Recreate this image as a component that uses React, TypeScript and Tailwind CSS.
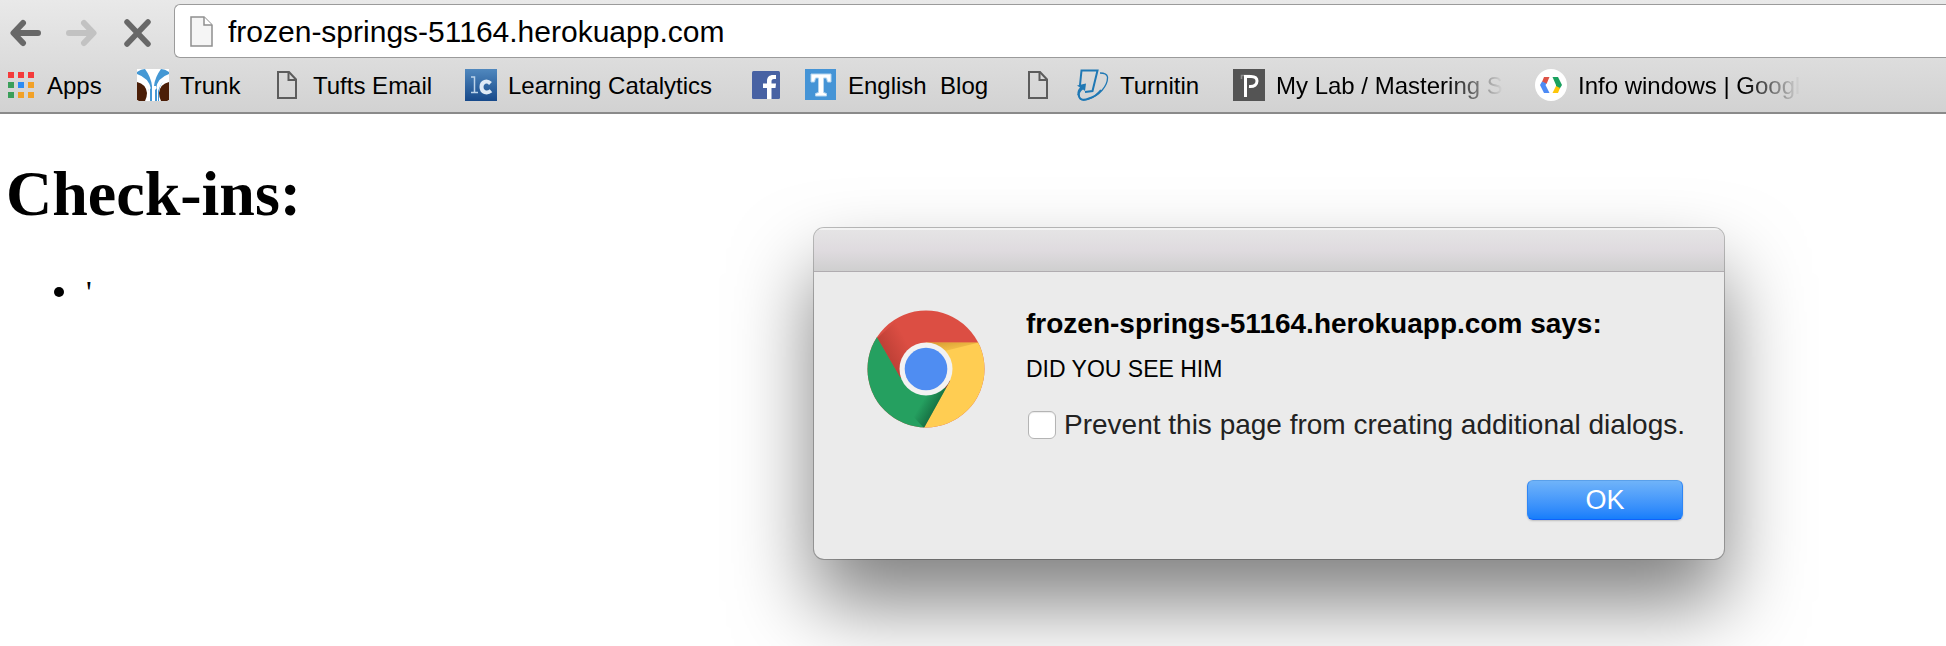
import type { ReactNode } from "react";

const HOST = "frozen-springs-51164.herokuapp.com";

function AppsIcon() {
  const colors = ["#f43b3b", "#f43b3b", "#f43b3b", "#3b9f5a", "#2b8cf5", "#f2a127", "#3b9f5a", "#f2a127", "#f2a127"];
  return (
    <svg width="26" height="26" viewBox="0 0 26 26" aria-hidden="true">
      {colors.map((c, i) => (
        <rect key={i} x={(i % 3) * 10} y={Math.floor(i / 3) * 10} width="6" height="6" fill={c} />
      ))}
    </svg>
  );
}

function TrunkIcon() {
  return (
    <svg width="32" height="32" viewBox="0 0 32 32" aria-hidden="true">
      <rect width="32" height="32" fill="#fff" />
      <path d="M0 3Q4 0 8 0Q14 8 15 17V32H12V22Q10 11 0 8Z" fill="#4498d4" />
      <path d="M32 3Q28 0 24 0Q18 8 17 17H19V32H22V22Q24 11 32 8Z" fill="#4498d4" />
      <path d="M0 5Q12 9 14 20V32H12V22Q9 12 0 9Z" fill="#fff" />
      <path d="M32 5Q20 9 19 20V32H21V22Q24 12 32 9Z" fill="#fff" />
      <path d="M13 19L15 21V32H13ZM18 21L20 19V32H18Z" fill="#4498d4" />
      <path d="M0 13Q9 15 10 24Q10 28 8 32H2L0 31ZM32 13Q23 15 22 24Q22 28 24 32H30L32 31Z" fill="#4b1e07" />
    </svg>
  );
}

function FileIcon() {
  return (
    <svg width="20" height="28" viewBox="0 0 20 28" fill="none" stroke="#5c5c5c" strokeWidth="2" aria-hidden="true">
      <path d="M1 1H12L19 8.500V27H1Z" />
      <path d="M11.500 1V9H19" />
    </svg>
  );
}

function CatalyticsIcon() {
  return (
    <svg width="32" height="32" viewBox="0 0 32 32" aria-hidden="true">
      <defs>
        <linearGradient id="lc" x1="0" y1="0" x2="0" y2="1">
          <stop offset="0" stopColor="#5088be" />
          <stop offset="1" stopColor="#17498a" />
        </linearGradient>
      </defs>
      <rect width="32" height="32" fill="url(#lc)" />
      <path d="M6 8H9.500V23M6 23.500H13" fill="none" stroke="#bcd3ea" strokeWidth="1.500" />
      <path d="M25.500 14.500C22 11 16.500 12.500 16.500 18C16.500 23.500 22 25 26 21.800" fill="none" stroke="#dfeaf6" strokeWidth="4" />
    </svg>
  );
}

function FacebookIcon() {
  return (
    <svg width="28" height="28" viewBox="0 0 28 28" aria-hidden="true">
      <rect width="28" height="28" rx="1.500" fill="#4862a3" />
      <path d="M15 28V17H11V12.500H15V10C15 6 17.500 4 21 4H24V8H22C20 8 19.500 9 19.500 10.500V12.500H24L23.500 17H19.500V28Z" fill="#fff" />
    </svg>
  );
}

function BlogIcon() {
  return (
    <svg width="32" height="32" viewBox="0 0 32 32" aria-hidden="true">
      <rect width="31" height="31" fill="#4594d6" />
      <path
        d="M6 5H26V13H22.500L21.500 9H18.500V23.500L21.500 24.500V27H10.500V24.500L13.500 23.500V9H10.500L9.500 13H6Z"
        fill="#fff"
        stroke="#b5d5ef"
        strokeWidth="1"
      />
    </svg>
  );
}

function TurnitinIcon() {
  return (
    <svg width="32" height="32" viewBox="0 0 32 32" fill="none" stroke="#1f78b4" aria-hidden="true">
      <path d="M3 16L4.500 1.500H20.500L15.500 22L8 23" strokeWidth="2" />
      <path d="M0 16.500L9 14.500L8 22L6 20.500Q2.500 22.500 2.500 27L0.500 26Q0 21 3 18.500Z" fill="#1f78b4" stroke="none" />
      <path d="M2 26C2 31 6 32 11 30C22 27 31 17 30.500 8C30 5 27 4 23 4" strokeWidth="1.300" />
      <path d="M1.500 25C2 31 6 32 12 29.500C17 28 21 25 24 21" strokeWidth="2" />
    </svg>
  );
}

function PearsonIcon() {
  return (
    <svg width="32" height="32" viewBox="0 0 32 32" aria-hidden="true">
      <rect width="32" height="32" fill="#545454" />
      <path d="M8.500 10V6.500H17" fill="none" stroke="#8c8c8c" strokeWidth="1.500" />
      <path d="M12.500 28V8.500M11 7.500H18C22.500 7.500 24 9.500 24 12C24 15.500 21.500 18 16 17.500" fill="none" stroke="#fff" strokeWidth="3" />
    </svg>
  );
}

function DevelopersIcon() {
  return (
    <svg width="32" height="32" viewBox="0 0 32 32" aria-hidden="true">
      <circle cx="16" cy="16" r="16" fill="#fff" />
      <path d="M9 8H14.500L11.500 15L7 13Z" fill="#dd5347" />
      <path d="M5 16L7 12.500L11.500 14.500L10.500 16L14.500 24H9Z" fill="#4d8bf5" />
      <path d="M17.500 8H23L27 16L24.500 20L21 17.500V16Z" fill="#1aa15f" />
      <path d="M21 17L25 19L23 24H17.500Z" fill="#fdc60a" />
    </svg>
  );
}

function ChromeLogo() {
  return (
    <svg width="118" height="118" viewBox="0 0 118 118" aria-hidden="true">
      <defs>
        <clipPath id="disc">
          <circle cx="59" cy="59" r="58.500" />
        </clipPath>
        <linearGradient id="redShade" gradientUnits="userSpaceOnUse" x1="20" y1="48" x2="42" y2="36">
          <stop offset="0" stopColor="#8e2a22" stopOpacity="0.400" />
          <stop offset="1" stopColor="#8e2a22" stopOpacity="0" />
        </linearGradient>
        <linearGradient id="yellowShade" gradientUnits="userSpaceOnUse" x1="80" y1="32" x2="82" y2="44">
          <stop offset="0" stopColor="#b8791c" stopOpacity="0.500" />
          <stop offset="1" stopColor="#c98a20" stopOpacity="0.100" />
        </linearGradient>
        <linearGradient id="greenShade" gradientUnits="userSpaceOnUse" x1="70" y1="94" x2="58" y2="87">
          <stop offset="0" stopColor="#0a4a2c" stopOpacity="0.500" />
          <stop offset="1" stopColor="#0a4a2c" stopOpacity="0" />
        </linearGradient>
      </defs>
      <g clipPath="url(#disc)">
        <rect width="118" height="118" fill="#dc4e43" />
        <path d="M0 12L10.500 28L33 67L60 80L80 78L57 118H0Z" fill="#25a060" />
        <path d="M59 32.500H118V118H57L83 71Z" fill="#ffcd52" />
        <path d="M10.500 28L33 67L59 32L30 10Z" fill="url(#redShade)" />
        <path d="M59 32.500H112L78 41Z" fill="url(#yellowShade)" />
        <path d="M83 71L57 118L40 100V78Z" fill="url(#greenShade)" />
      </g>
      <circle cx="59" cy="59" r="26.500" fill="#f2f2f2" />
      <circle cx="59" cy="59" r="21.300" fill="#4f8df2" />
    </svg>
  );
}

type Bookmark = { label: string; name: string; icon: ReactNode; box: string; fade?: boolean };

const bookmarks: Bookmark[] = [
  { label: "Apps", name: "Apps", icon: <AppsIcon />, box: "w-[129px] gap-[13px]" },
  { label: "Trunk", name: "Trunk", icon: <TrunkIcon />, box: "w-[140px] gap-[11px]" },
  { label: "Tufts Email", name: "Tufts Email", icon: <FileIcon />, box: "w-[188px] gap-4" },
  { label: "Learning Catalytics", name: "Learning Catalytics", icon: <CatalyticsIcon />, box: "w-[287px] gap-[11px]" },
  { label: "", name: "Facebook", icon: <FacebookIcon />, box: "w-[53px]" },
  { label: "English  Blog", name: "English Blog", icon: <BlogIcon />, box: "w-[223px] gap-[11px]" },
  { label: "", name: "Untitled page", icon: <FileIcon />, box: "w-[49px]" },
  { label: "Turnitin", name: "Turnitin", icon: <TurnitinIcon />, box: "w-[156px] gap-[11px]" },
  { label: "My Lab / Mastering S", name: "My Lab / Mastering", icon: <PearsonIcon />, box: "w-[302px] gap-[11px]", fade: true },
  { label: "Info windows | Googl", name: "Info windows | Google", icon: <DevelopersIcon />, box: "gap-[11px]", fade: true },
];

function Toolbar() {
  return (
    <header className="border-b-2 border-[#8a8a8a] bg-linear-to-b from-[#e9e9e9] to-[#d2d2d2] font-['Liberation_Sans',Arial,sans-serif]">
      <div className="flex h-[58px] items-stretch pt-1">
        <nav className="flex w-[174px] shrink-0 items-center gap-6 pt-1 pl-[10px]" aria-label="History">
          <button type="button" aria-label="Back">
            <svg width="32" height="28" viewBox="0 0 32 28" fill="none" stroke="#686868" strokeWidth="6" strokeLinecap="round" strokeLinejoin="round">
              <path d="M28 14H5M13 4L3.500 14L13 24" />
            </svg>
          </button>
          <button type="button" aria-label="Forward" disabled>
            <svg width="32" height="28" viewBox="0 0 32 28" fill="none" stroke="#c2c2c2" strokeWidth="6" strokeLinecap="round" strokeLinejoin="round">
              <path d="M3 14H27M18 4L27.500 14L18 24" />
            </svg>
          </button>
          <button type="button" aria-label="Stop">
            <svg width="30" height="28" viewBox="0 0 30 28" fill="none" stroke="#686868" strokeWidth="5.500" strokeLinecap="round">
              <path d="M5 3L26 25M26 3L5 25" />
            </svg>
          </button>
        </nav>
        <div className="flex min-w-0 flex-1 items-center rounded-l-md border border-r-0 border-[#9b9b9b] bg-white pl-[15px]">
          <svg width="23" height="31" viewBox="0 0 23 31" aria-hidden="true">
            <path d="M1 1H14L22 9V30H1Z" fill="#f5f5f5" stroke="#8f8f8f" strokeWidth="1.500" />
            <path d="M14 1V9H22" fill="#fff" stroke="#8f8f8f" strokeWidth="1.500" />
          </svg>
          <input
            type="text"
            aria-label="Address"
            defaultValue={HOST}
            className="ml-[15px] h-full min-w-0 flex-1 bg-transparent pt-[2px] text-[30px] text-black outline-none"
          />
        </div>
      </div>
      <nav className="flex h-[54px] items-center overflow-hidden pl-2" aria-label="Bookmarks">
        {bookmarks.map((b) => (
          <a key={b.name} href="#" aria-label={b.name} className={`flex shrink-0 items-center ${b.box}`}>
            <span className="shrink-0">{b.icon}</span>
            {b.label && (
              <span
                className={`pt-[2px] text-2xl leading-8 whitespace-pre text-black ${
                  b.fade ? "mask-r-from-75% mask-r-to-100%" : ""
                }`}
              >
                {b.label}
              </span>
            )}
          </a>
        ))}
      </nav>
    </header>
  );
}

function AlertDialog() {
  return (
    <section
      role="dialog"
      aria-labelledby="alert-title"
      className="absolute top-[228px] left-[814px] w-[910px] overflow-hidden rounded-[10px] bg-[#ebebeb] font-['Liberation_Sans',Arial,sans-serif] shadow-[0_0_0_1px_rgba(0,0,0,0.25),0_44px_80px_rgba(0,0,0,0.5)]"
    >
      <div className="h-11 border-t-2 border-b border-t-[#f3f3f3] border-b-[#b0acb0] bg-linear-to-b from-[#e5e4e5] via-[#dfdbdf] to-[#cfcfcf]" />
      <div className="flex gap-[41px] pt-[38px] pr-[41px] pb-[39px] pl-[53px]">
        <div className="shrink-0">
          <ChromeLogo />
        </div>
        <div className="flex min-w-0 flex-1 flex-col">
          <h2 id="alert-title" className="text-[28px] leading-[28px] font-bold whitespace-nowrap text-black">
            {HOST} says:
          </h2>
          <p className="mt-[15px] text-[23px] leading-8 text-black">DID YOU SEE HIM</p>
          <label className="mt-6 flex items-center gap-2 pl-[2px] text-[28px] leading-[32px] whitespace-nowrap text-[#222]">
            <input
              type="checkbox"
              className="size-7 shrink-0 appearance-none rounded-md border border-[#b4b4b4] bg-white shadow-[inset_0_1px_1px_rgba(0,0,0,0.08)]"
            />
            Prevent this page from creating additional dialogs.
          </label>
          <button
            type="button"
            className="mt-[39px] h-10 w-[156px] self-end rounded-md border border-[#2f86f5] border-t-[#5aa0ea] border-b-[#0f62fb] bg-linear-to-b from-[#6fb3f9] to-[#157efb] text-[27px] leading-[32px] text-white shadow-[0_1px_2px_rgba(0,0,0,0.2)]"
          >
            OK
          </button>
        </div>
      </div>
    </section>
  );
}

export default function App() {
  return (
    <div className="relative min-h-screen overflow-hidden bg-white">
      <Toolbar />
      <main className="px-[6px] pt-[43px] font-['Liberation_Serif','Times_New_Roman',serif] text-black">
        <h1 className="text-[64px] leading-[74px] font-bold">Check-ins:</h1>
        <ul className="mt-[43px] pl-12 text-[32px] leading-[36px]">
          <li className="flex items-center gap-[22px] before:size-[10px] before:rounded-full before:bg-black">'</li>
        </ul>
      </main>
      <AlertDialog />
    </div>
  );
}
